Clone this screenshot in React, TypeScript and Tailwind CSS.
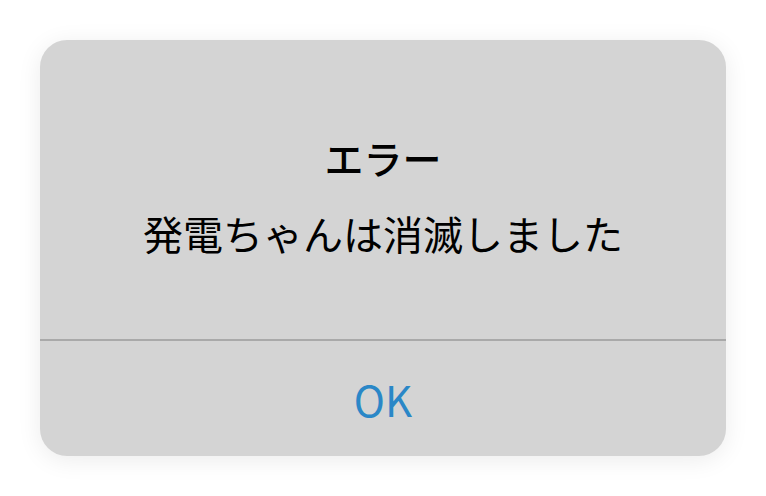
export default function App() {
  return (
    <div
      className="flex h-[496px] w-[766px] items-start justify-center bg-white pt-[40px]"
      style={{ fontFamily: '"Noto Sans CJK JP", "Noto Sans", sans-serif' }}
    >
      <div className="flex h-[416px] w-[686px] flex-col overflow-hidden rounded-[27px] bg-[#d4d4d4] shadow-[0_4px_24px_rgba(0,0,0,0.08)]">
        {/* Message */}
        <div className="flex h-[299px] flex-col items-center pt-[91px] text-black">
          <h1 className="text-[39px] leading-[53px] font-medium">エラー</h1>
          <p className="mt-[23px] text-[40px] leading-[53px] font-normal">発電ちゃんは消滅しました</p>
        </div>
        <div className="h-[2px] bg-[#a9a9a9]" />
        {/* Button */}
        <button className="flex flex-1 items-center justify-center text-[42px] text-[#2a87c7]">
          OK
        </button>
      </div>
    </div>
  );
}
